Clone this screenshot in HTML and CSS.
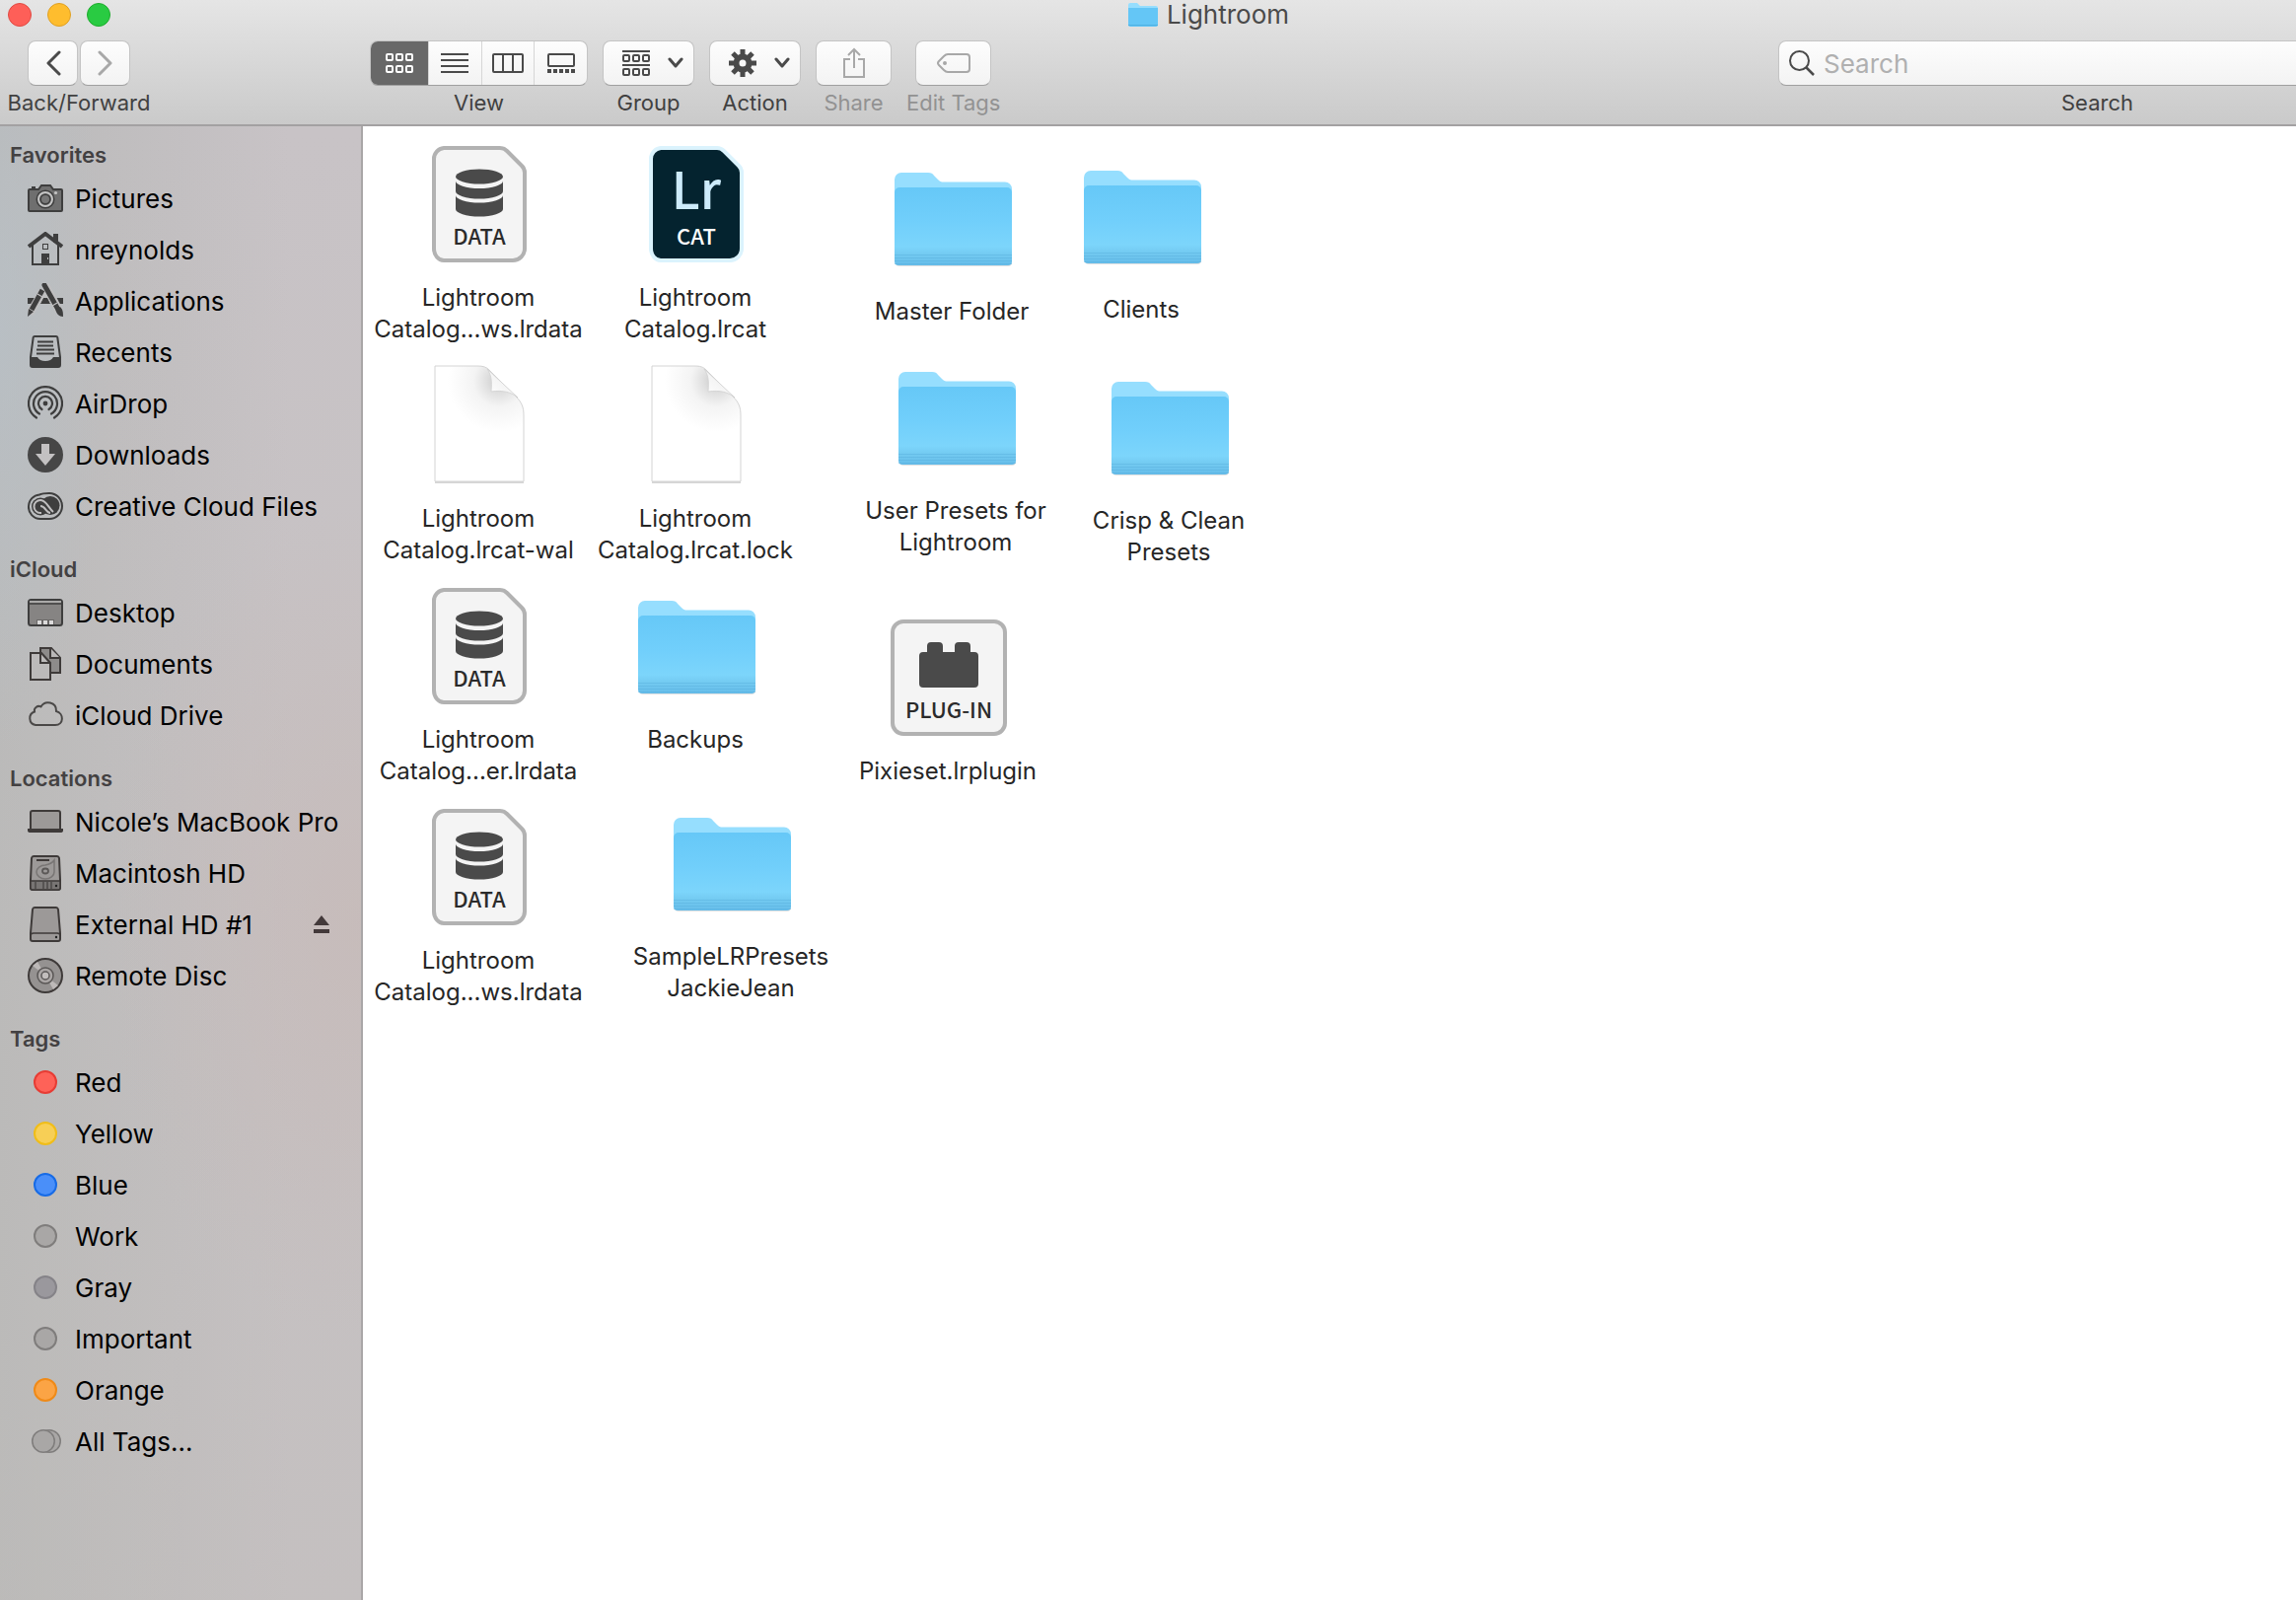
FILE: index.html
```html
<!DOCTYPE html>
<html lang="en">
<head>
<meta charset="utf-8">
<meta name="viewport" content="width=device-width, initial-scale=1.0">
<title>Lightroom</title>
<link rel="stylesheet" href="styles.css">
</head>
<body>
<!-- shared icons -->
<svg class="sprite" aria-hidden="true">
  <defs>
    <linearGradient id="folderFront" x1="0" y1="0" x2="0" y2="1">
      <stop offset="0" stop-color="#66c8f7"/>
      <stop offset="0.45" stop-color="#71cffb"/>
      <stop offset="0.76" stop-color="#7cd5fb"/>
      <stop offset="0.87" stop-color="#72c9f0"/>
      <stop offset="1" stop-color="#66bdea"/>
    </linearGradient>
    <radialGradient id="pageShade" gradientUnits="userSpaceOnUse" cx="66" cy="16" r="52">
      <stop offset="0" stop-color="#c8c8c8"/>
      <stop offset="0.25" stop-color="#e0e0e0"/>
      <stop offset="0.5" stop-color="#f4f4f4"/>
      <stop offset="1" stop-color="#ffffff"/>
    </radialGradient>
    <linearGradient id="curl" x1="0" y1="1" x2="0.6" y2="0.3">
      <stop offset="0" stop-color="#ffffff"/>
      <stop offset="1" stop-color="#f1f1f1"/>
    </linearGradient>
  </defs>
  <symbol id="folder" viewBox="0 0 120 96">
    <rect x="1" y="80" width="118" height="15" rx="4" fill="#000" opacity="0.12"/>
    <path d="M0 7a7 7 0 0 1 7-7h27c3 0 5 1 6 3l4 4c2 2 3 2.500 6 2.500h62a7 7 0 0 1 7 7v30H0z" fill="#96defe"/>
    <path d="M0 20a5 5 0 0 1 5-5h109a5 5 0 0 1 5 5v70a4 4 0 0 1-4 4H4a4 4 0 0 1-4-4z" fill="url(#folderFront)"/>
    <path d="M0 83.500h119M0 86.500h119M0 89.500h119M0 92.500h119" stroke="#55addb" stroke-width="1" opacity="0.4"/>
  </symbol>
  <symbol id="document" viewBox="0 0 96 118">
    <path d="M12 2h57q4 0 7 3l15 15q3 3 3 7v77a12 12 0 0 1-12 12H12a10 12 0 0 1-10-12V13A11 11 0 0 1 12 2z" stroke-width="4"/>
  </symbol>
  <symbol id="cylinder" viewBox="0 0 96 118">
    <ellipse cx="48" cy="31" rx="24" ry="7.500" fill="#4a4a4a"/>
    <path d="M24 35.500A24 7.500 0 0 0 72 35.500V46A24 7.500 0 0 1 24 46zM24 50A24 7.500 0 0 0 72 50V64A24 7.500 0 0 1 24 64z" fill="#4a4a4a"/>
  </symbol>
  <symbol id="page" viewBox="0 0 92 122">
    <rect x="1" y="112" width="90" height="8" fill="#000" opacity="0.16"/>
    <path d="M1 1h43c6 0 9 1 12 4l28 28c5 5 7 10 7 18v67H1z" fill="url(#pageShade)" stroke="#d4d4d4" stroke-width="1"/>
    <path d="M54 4c4 6 5 11 4 23 12-2 21 1 27 6z" fill="url(#curl)" stroke="#d0d0d0" stroke-width="0.800"/>
  </symbol>
  <symbol id="chevron" viewBox="0 0 16 12">
    <path d="M2 2l6 7 6-7" fill="none" stroke="#4a4a4a" stroke-width="3" stroke-linecap="round" stroke-linejoin="round"/>
  </symbol>
</svg>

<div class="window">
  <header class="header">
    <div class="titlebar">
      <div class="lights">
        <button class="light close" aria-label="Close"></button>
        <button class="light minimize" aria-label="Minimize"></button>
        <button class="light zoom" aria-label="Zoom"></button>
      </div>
      <h1 class="title">
        <svg class="title-folder" viewBox="0 0 30 24"><path d="M0 2a2 2 0 0 1 2-2h7l3 3h16a2 2 0 0 1 2 2v8H0z" fill="#96defe"/><path d="M0 5h30v17a2 2 0 0 1-2 2H2a2 2 0 0 1-2-2z" fill="#64c6f6"/><path d="M0 22.500h30" stroke="#4fb1e2"/></svg>
        Lightroom
      </h1>
    </div>
    <div class="toolbar">
      <div class="tool nav">
        <div class="pair">
          <button class="btn arrow" aria-label="Back"><svg width="16" height="26" viewBox="0 0 16 26"><path d="M14 2L3 13l11 11" fill="none" stroke="#4a4a4a" stroke-width="3" stroke-linecap="round" stroke-linejoin="round"/></svg></button>
          <button class="btn arrow" aria-label="Forward" disabled><svg width="16" height="26" viewBox="0 0 16 26"><path d="M2 2l11 11L2 24" fill="none" stroke="#a8a8a8" stroke-width="3" stroke-linecap="round" stroke-linejoin="round"/></svg></button>
        </div>
        <span class="caption">Back/Forward</span>
      </div>
      <div class="tool">
        <div class="segments">
          <button class="segment active" aria-label="Icons" aria-pressed="true">
            <svg width="28" height="20" viewBox="0 0 28 20"><g fill="none" stroke="#fff" stroke-width="2"><rect x="1" y="1" width="6" height="6" rx="1"/><rect x="11" y="1" width="6" height="6" rx="1"/><rect x="21" y="1" width="6" height="6" rx="1"/><rect x="1" y="13" width="6" height="6" rx="1"/><rect x="11" y="13" width="6" height="6" rx="1"/><rect x="21" y="13" width="6" height="6" rx="1"/></g></svg>
          </button>
          <button class="segment" aria-label="List">
            <svg width="28" height="20" viewBox="0 0 28 20"><path d="M0 1h28M0 7h28M0 13h28M0 19h28" stroke="#4a4a4a" stroke-width="2"/></svg>
          </button>
          <button class="segment" aria-label="Columns">
            <svg width="32" height="20" viewBox="0 0 32 20"><rect x="1" y="1" width="30" height="18" rx="1" fill="none" stroke="#4a4a4a" stroke-width="2"/><path d="M11 1v18M21 1v18" stroke="#4a4a4a" stroke-width="2"/></svg>
          </button>
          <button class="segment" aria-label="Gallery">
            <svg width="28" height="20" viewBox="0 0 28 20"><rect x="1" y="1" width="26" height="12" rx="1" fill="none" stroke="#4a4a4a" stroke-width="2"/><path d="M0 18h28" stroke="#4a4a4a" stroke-width="4" stroke-dasharray="4 2"/></svg>
          </button>
        </div>
        <span class="caption">View</span>
      </div>
      <div class="tool">
        <button class="btn popup" aria-label="Group">
          <svg width="28" height="26" viewBox="0 0 28 26"><path d="M0 1h28M0 15h28" stroke="#4a4a4a" stroke-width="2"/><g fill="none" stroke="#4a4a4a" stroke-width="2"><rect x="1" y="5" width="6" height="6" rx="1"/><rect x="11" y="5" width="6" height="6" rx="1"/><rect x="21" y="5" width="6" height="6" rx="1"/><rect x="1" y="19" width="6" height="6" rx="1"/><rect x="11" y="19" width="6" height="6" rx="1"/><rect x="21" y="19" width="6" height="6" rx="1"/></g></svg>
          <svg width="16" height="12"><use href="#chevron"/></svg>
        </button>
        <span class="caption">Group</span>
      </div>
      <div class="tool">
        <button class="btn popup" aria-label="Action">
          <svg width="28" height="28" viewBox="-14 -14 28 28"><g stroke="#4a4a4a" stroke-width="5"><path d="M0-14V-8M0 14V8M-14 0H-8M14 0H8M-10-10L-6-6M10 10L6 6M-10 10L-6 6M10-10L6-6"/></g><circle r="6.500" fill="none" stroke="#4a4a4a" stroke-width="6"/></svg>
          <svg width="16" height="12"><use href="#chevron"/></svg>
        </button>
        <span class="caption">Action</span>
      </div>
      <div class="tool">
        <button class="btn single" aria-label="Share" disabled>
          <svg width="22" height="32" viewBox="0 0 22 32"><path d="M7 12H1v18h20V12h-6M11 21V2M5 8l6-6 6 6" fill="none" stroke="#a8a8a8" stroke-width="2"/></svg>
        </button>
        <span class="caption dim">Share</span>
      </div>
      <div class="tool">
        <button class="btn single" aria-label="Edit Tags" disabled>
          <svg width="34" height="20" viewBox="0 0 34 20"><path d="M11 1h19a3 3 0 0 1 3 3v12a3 3 0 0 1-3 3H11c-2 0-3-1-4-2l-5-5q-2-2 0-4l5-5c1-1 2-2 4-2z" fill="none" stroke="#a8a8a8" stroke-width="2"/><circle cx="8" cy="10" r="2" fill="#a8a8a8"/></svg>
        </button>
        <span class="caption dim">Edit Tags</span>
      </div>
      <div class="tool search">
        <div class="search-box">
          <svg width="26" height="26" viewBox="0 0 26 26"><circle cx="10.500" cy="10.500" r="9.500" fill="none" stroke="#4a4a4a" stroke-width="2"/><path d="M17 17l8 8" stroke="#4a4a4a" stroke-width="2.500"/></svg>
          <input id="search" class="search-input" type="text" placeholder="Search">
        </div>
        <label class="caption" for="search">Search</label>
      </div>
    </div>
  </header>

  <div class="content">
    <nav class="sidebar">
      <h2 class="heading">Favorites</h2>
      <ul class="list">
        <li><a class="row" href="#"><svg class="icon" viewBox="0 0 36 36"><path d="M4 6h4v2H4z" fill="#3e3e3e"/><path d="M2 9h9l3-4h9l3 4h8q1 0 1 1v20q0 1-1 1H2q-1 0-1-1V10q0-1 1-1z" fill="#6f6f6f" stroke="#3e3e3e" stroke-width="2"/><circle cx="18" cy="19" r="9.500" fill="#3e3e3e"/><circle cx="18" cy="19" r="7" fill="#707070" stroke="#c5c5c5" stroke-width="2"/><circle cx="18" cy="19" r="4.800" fill="#777" stroke="#3e3e3e" stroke-width="1.500"/><circle cx="28.500" cy="12.500" r="1.600" fill="#c5c5c5"/></svg>Pictures</a></li>
        <li><a class="row" href="#"><svg class="icon" viewBox="0 0 36 36"><path d="M5 13v20h26V13" fill="none" stroke="#3e3e3e" stroke-width="2"/><path d="M1 15L18 2l17 13" fill="none" stroke="#3e3e3e" stroke-width="4"/><path d="M26 2h5v9h-5zM14 22h8v11h-8z" fill="#3e3e3e"/><rect x="15.500" y="12.500" width="5" height="5" fill="none" stroke="#3e3e3e"/><path d="M20.500 26v2" stroke="#bbb"/></svg>nreynolds</a></li>
        <li><a class="row" href="#"><svg class="icon" viewBox="0 0 36 36"><path d="M0 15h36v6H0z" fill="#3e3e3e"/><path d="M12 21L18 10l6 11z" fill="#c0c0c0"/><path d="M13 21l3-6h4l3 6z" fill="#3e3e3e"/><path d="M18 2L32 28" stroke="#c0bfc0" stroke-width="8"/><path d="M16 7L2 31" stroke="#c0bfc0" stroke-width="8"/><path d="M17 2L30 25" stroke="#3e3e3e" stroke-width="5" stroke-linecap="round"/><path d="M15 7L4 27" stroke="#3e3e3e" stroke-width="5"/><path d="M1 26l5 3-6 5zM28 26l5-2c3 3 3 6 3 10-4 0-7-3-8-8z" fill="#3e3e3e"/><path d="M10 11l5 3M25 23l5-3" stroke="#c0bfc0" stroke-width="1.200"/></svg>Applications</a></li>
        <li><a class="row" href="#"><svg class="icon" viewBox="0 0 36 36"><path d="M7 2h22q1 0 1.300 1L33 23v8q0 2-2 2H5q-2 0-2-2v-8L5.700 3Q6 2 7 2z" fill="none" stroke="#3e3e3e" stroke-width="2"/><path d="M3 23h7q2 4 8 4t8-4h7v8q0 2-2 2H5q-2 0-2-2z" fill="#3e3e3e"/><path d="M10 7.500h16M10 11.500h16M9 15.500h18M9 19.500h18" stroke="#3e3e3e" stroke-width="1.800"/></svg>Recents</a></li>
        <li><a class="row" href="#"><svg class="icon" viewBox="0 0 36 36"><g fill="none" stroke="#3e3e3e" stroke-width="2.200" stroke-linecap="round"><path d="M9 32.500a17 17 0 1 1 18 0M12 28.500a12 12 0 1 1 12 0M14.500 24a7 7 0 1 1 7 0"/></g><circle cx="18" cy="18" r="2.400" fill="#3e3e3e"/></svg>AirDrop</a></li>
        <li><a class="row" href="#"><svg class="icon" viewBox="0 0 36 36"><circle cx="18" cy="18" r="18" fill="#464646"/><path d="M14 7h8v10h6L18 29 8 17h6z" fill="#c3c1c2"/></svg>Downloads</a></li>
        <li><a class="row" href="#"><svg class="icon" viewBox="0 0 36 36"><path d="M12 6.500C15 5 17 5 22 5a13 13 0 0 1 0 26H13A12 12 0 0 1 1 18 12 12 0 0 1 12 6.500z" fill="none" stroke="#3e3e3e" stroke-width="2"/><circle cx="23" cy="17.500" r="9.500" fill="#3e3e3e"/><circle cx="13" cy="18.500" r="9" fill="#3e3e3e"/><path d="M14 25h-1a6 6 0 0 1 0-13c6 0 8 8 13 12M13 18c5 0 6 7 10 7" fill="none" stroke="#c0bfc0" stroke-width="2"/></svg>Creative Cloud Files</a></li>
      </ul>
      <h2 class="heading">iCloud</h2>
      <ul class="list">
        <li><a class="row" href="#"><svg class="icon" viewBox="0 0 36 36"><rect x="1" y="5" width="34" height="26" rx="2.500" fill="#868483" stroke="#3e3e3e" stroke-width="2"/><path d="M2 6h32v2H2z" fill="#aaa9a8"/><path d="M1 9h34" stroke="#3e3e3e" stroke-width="1.500"/><path d="M9 30v-5h18v5z" fill="#6a6867"/><path d="M10 26h4v4h-4zM16 26h4v4h-4zM22 26h4v4h-4z" fill="#dbdada"/></svg>Desktop</a></li>
        <li><a class="row" href="#"><svg class="icon" viewBox="0 0 36 36"><g stroke="#3e3a39" stroke-width="2"><path d="M13 2h11l9 10v15H13z" fill="#8d8b8a"/><path d="M23 2v10h10" fill="#b9b7b7"/><path d="M3 7h11l9 10v17H3z" fill="#bcbaba"/><path d="M13 7v10h10" fill="none"/></g></svg>Documents</a></li>
        <li><a class="row" href="#"><svg class="icon" viewBox="0 0 36 36"><path d="M8 28a7 7 0 0 1-1-13.500C6 11 10 7.500 13.500 9.500c4-7 16-5 15.500 4.500 8 2 8 14-1 14z" fill="none" stroke="#4a4847" stroke-width="2"/></svg>iCloud Drive</a></li>
      </ul>
      <h2 class="heading">Locations</h2>
      <ul class="list">
        <li><a class="row" href="#"><svg class="icon" viewBox="0 0 36 36"><rect x="3" y="7" width="30" height="20" rx="2" fill="#9c9998" stroke="#3e3a39" stroke-width="2"/><path d="M0 25h36v2q0 2-3 2H3q-3 0-3-2z" fill="#3e3a39"/></svg>Nicole’s MacBook Pro</a></li>
        <li><a class="row" href="#"><svg class="icon" viewBox="0 0 36 36"><path d="M6 1h24q1.500 0 2 2l1 22v8q0 2-2 2H5q-2 0-2-2v-8L4 3q.500-2 2-2z" fill="#9c9998" stroke="#3e3a39" stroke-width="2"/><path d="M3 26h30v7q0 2-2 2H5q-2 0-2-2z" fill="#787574" stroke="#3e3a39" stroke-width="1.500"/><path d="M9 5h13" stroke="#3e3a39" stroke-width="2"/><path d="M27 5v12a9 7 0 1 1-9-7q6-1 9-5z" fill="none" stroke="#787574" stroke-width="1.500"/><ellipse cx="18" cy="16" rx="3" ry="2.500" fill="none" stroke="#5b5857" stroke-width="1.800"/><path d="M8 27v8M16 27v8M20 27v8M24 27v8" stroke="#4c4948" stroke-width="1.500"/><circle cx="29" cy="31" r="1.200" fill="#222"/></svg>Macintosh HD</a></li>
        <li class="split"><a class="row" href="#"><svg class="icon" viewBox="0 0 36 36"><path d="M7 1h22q1.500 0 2 2l2 24v6q0 2-2 2H5q-2 0-2-2v-6L5 3q.500-2 2-2z" fill="#9c9998" stroke="#3e3a39" stroke-width="2"/><path d="M3 30q0-3 3-3h24q3 0 3 3" fill="none" stroke="#3e3a39" stroke-width="1.500"/><circle cx="29" cy="31" r="1.200" fill="#222"/></svg>External HD #1</a>
          <button class="eject" aria-label="Eject"><svg width="16" height="18" viewBox="0 0 16 18"><path d="M8 0l8 10H0zM0 14h16v4H0z" fill="#43393a"/></svg></button></li>
        <li><a class="row" href="#"><svg class="icon" viewBox="0 0 36 36"><circle cx="18" cy="18" r="17" fill="#959291" stroke="#3e3a39" stroke-width="2"/><path d="M18 18L5 8l5-4zM18 18l13 10-5 4z" fill="#bdb9b8"/><circle cx="18" cy="18" r="8" fill="#aaa6a5" stroke="#5a5756" stroke-width="1.500"/><circle cx="18" cy="18" r="4" fill="#c2bebd" stroke="#5a5756" stroke-width="1.500"/></svg>Remote Disc</a></li>
      </ul>
      <h2 class="heading">Tags</h2>
      <ul class="list">
        <li><a class="row" href="#"><span class="tag red"></span>Red</a></li>
        <li><a class="row" href="#"><span class="tag yellow"></span>Yellow</a></li>
        <li><a class="row" href="#"><span class="tag blue"></span>Blue</a></li>
        <li><a class="row" href="#"><span class="tag"></span>Work</a></li>
        <li><a class="row" href="#"><span class="tag gray"></span>Gray</a></li>
        <li><a class="row" href="#"><span class="tag"></span>Important</a></li>
        <li><a class="row" href="#"><span class="tag orange"></span>Orange</a></li>
        <li><a class="row" href="#"><svg class="icon" viewBox="0 0 36 36"><g fill="#a9a7a6" stroke="#7f7d7c" stroke-width="1.500"><circle cx="22" cy="18" r="11.250"/><circle cx="16" cy="18" r="11.250"/></g></svg>All Tags...</a></li>
      </ul>
    </nav>

    <!-- files keep the spot they were dropped on -->
    <main class="files">
      <div class="file previews"><div class="thumb"><svg width="96" height="118"><use class="paper" href="#document"/><use href="#cylinder"/><text class="badge-text" x="48" y="100">DATA</text></svg></div><span class="name">Lightroom<br>Catalog...ws.lrdata</span></div>
      <div class="file catalog"><div class="thumb"><svg width="96" height="118"><use class="navy" href="#document"/><text class="logo-text" x="48" y="64">Lr</text><text class="badge-text light-text" x="48" y="100">CAT</text></svg></div><span class="name">Lightroom<br>Catalog.lrcat</span></div>
      <div class="file master"><div class="thumb folder"><svg width="120" height="96"><use href="#folder"/></svg></div><span class="name">Master Folder</span></div>
      <div class="file clients"><div class="thumb folder"><svg width="120" height="96"><use href="#folder"/></svg></div><span class="name">Clients</span></div>
      <div class="file wal"><div class="thumb"><svg width="92" height="122"><use href="#page"/></svg></div><span class="name">Lightroom<br>Catalog.lrcat-wal</span></div>
      <div class="file lock"><div class="thumb"><svg width="92" height="122"><use href="#page"/></svg></div><span class="name">Lightroom<br>Catalog.lrcat.lock</span></div>
      <div class="file user-presets"><div class="thumb folder"><svg width="120" height="96"><use href="#folder"/></svg></div><span class="name">User Presets for<br>Lightroom</span></div>
      <div class="file crisp"><div class="thumb folder"><svg width="120" height="96"><use href="#folder"/></svg></div><span class="name">Crisp &amp; Clean<br>Presets</span></div>
      <div class="file helper"><div class="thumb"><svg width="96" height="118"><use class="paper" href="#document"/><use href="#cylinder"/><text class="badge-text" x="48" y="100">DATA</text></svg></div><span class="name">Lightroom<br>Catalog...er.lrdata</span></div>
      <div class="file backups"><div class="thumb folder"><svg width="120" height="96"><use href="#folder"/></svg></div><span class="name">Backups</span></div>
      <div class="file pixieset"><div class="thumb"><svg width="118" height="118"><rect class="paper" x="2" y="2" width="114" height="114" rx="11" stroke-width="4"/><path d="M29 37a4 4 0 0 1 4-4h4v-6a4 4 0 0 1 4-4h8a4 4 0 0 1 4 4v6h12v-6a4 4 0 0 1 4-4h8a4 4 0 0 1 4 4v6h4a4 4 0 0 1 4 4v28a4 4 0 0 1-4 4H33a4 4 0 0 1-4-4z" fill="#4a4a4a"/><text class="badge-text" x="59" y="100">PLUG-IN</text></svg></div><span class="name">Pixieset.lrplugin</span></div>
      <div class="file smart"><div class="thumb"><svg width="96" height="118"><use class="paper" href="#document"/><use href="#cylinder"/><text class="badge-text" x="48" y="100">DATA</text></svg></div><span class="name">Lightroom<br>Catalog...ws.lrdata</span></div>
      <div class="file sample"><div class="thumb folder"><svg width="120" height="96"><use href="#folder"/></svg></div><span class="name">SampleLRPresets<br>JackieJean</span></div>
    </main>
  </div>
</div>
</body>
</html>
```
FILE: styles.css
```css
* {
  box-sizing: border-box;
}

body {
  margin: 0;
  overflow: hidden;
  font-family: Inter, "Liberation Sans", sans-serif;
  color: #000;
}

button {
  padding: 0;
  border: none;
  font: inherit;
}

.sprite {
  position: absolute;
  width: 0;
  height: 0;
}

/* the window runs past the right edge of the screen */
.window {
  display: flex;
  flex-direction: column;
  width: calc(100% + 122px);
  height: 100vh;
  background: #fff;
}

.header {
  background: linear-gradient(#e5e5e5, #cacaca);
  border-bottom: 2px solid #a3a1a2;
}

.titlebar {
  display: grid;
  grid-template-columns: 1fr auto 1fr;
  align-items: center;
  height: 28px;
}

.lights {
  display: flex;
  gap: 16px;
  padding-left: 8px;
}

.light {
  width: 24px;
  height: 24px;
  border-radius: 50%;
}

.close {
  background: #fe5f58;
  border: 1px solid #e04a43;
}

.minimize {
  background: #febd2e;
  border: 1px solid #dfa023;
}

.zoom {
  background: #29cb42;
  border: 1px solid #1dac2c;
}

.title {
  display: flex;
  align-items: center;
  gap: 9px;
  margin: 0;
  padding: 1px 0 0 1px;
  font-size: 26px;
  line-height: 28px;
  font-weight: 400;
  color: #4a4a4a;
}

.title-folder {
  width: 30px;
  height: 24px;
}

.toolbar {
  display: flex;
  gap: 15px;
  padding: 13px 0 7px 8px;
}

.tool {
  display: flex;
  flex-direction: column;
  align-items: center;
  gap: 2px;
}

.nav {
  width: 144px;
  margin-right: 208px;
}

.caption {
  font-size: 22px;
  line-height: 30px;
  color: #414141;
  white-space: nowrap;
}

.dim {
  color: #929292;
}

.pair {
  display: flex;
  gap: 2px;
}

.btn,
.segments,
.search-box {
  height: 46px;
  background: linear-gradient(#fdfdfd, #f3f3f3);
  border: 1px solid #c4c4c4;
  border-bottom-color: #a0a0a0;
  border-radius: 8px;
}

.btn {
  display: flex;
  align-items: center;
  justify-content: center;
}

.arrow {
  width: 51px;
}

.popup {
  width: 93px;
  padding: 0 10px 0 19px;
  justify-content: space-between;
}

.single {
  width: 77px;
}

.segments {
  display: flex;
  width: 221px;
  overflow: hidden;
}

.segment {
  display: flex;
  flex: 1;
  align-items: center;
  justify-content: center;
  background: none;
  border-left: 1px solid #d6d6d6;
}

.active {
  flex: 0 0 58px;
  background: #686868;
  border-left: none;
}

.search {
  width: 647px;
  margin-left: auto;
}

.search-box {
  display: flex;
  align-items: center;
  gap: 9px;
  width: 100%;
  padding-left: 10px;
}

.search-input {
  flex: 1;
  padding: 0;
  border: none;
  outline: none;
  background: none;
  font: inherit;
  font-size: 26px;
}

.search-input::placeholder {
  color: #b0b0b0;
}

.content {
  display: flex;
  flex: 1;
  min-height: 0;
}

.sidebar {
  width: 368px;
  border-right: 2px solid #a9a6a7;
  background:
    radial-gradient(ellipse 260px 420px at 100% 54%, rgba(199, 184, 181, 0.6), rgba(199, 184, 181, 0)),
    radial-gradient(ellipse 110px 420px at 0 14%, rgba(184, 192, 198, 0.8), rgba(184, 192, 198, 0)),
    linear-gradient(to bottom, rgba(196, 192, 189, 0), rgba(190, 187, 183, 0.4)),
    linear-gradient(to right, #bababa, #c8c3c6 80%);
}

.heading {
  margin: 0;
  padding: 20px 0 0 10px;
  font-size: 22px;
  line-height: 36px;
  font-weight: 600;
  color: #434142;
}

.heading:first-child {
  padding-top: 11px;
}

.list {
  margin: 0;
  padding: 0;
  list-style: none;
}

.row {
  display: flex;
  align-items: center;
  gap: 12px;
  height: 52px;
  padding-left: 28px;
  font-size: 26px;
  color: #000;
  text-decoration: none;
  white-space: nowrap;
}

.icon {
  width: 36px;
  height: 36px;
}

.split {
  display: flex;
  align-items: center;
  justify-content: space-between;
  padding-right: 32px;
}

.eject {
  display: flex;
  background: none;
}

.tag {
  width: 24px;
  height: 24px;
  margin: 0 6px;
  border: 2px solid #7f7d7c;
  border-radius: 50%;
  background: #a9a7a6;
}

.red {
  background: #fe6258;
  border-color: #e73c34;
}

.yellow {
  background: #f7cf56;
  border-color: #f0bd18;
}

.blue {
  background: #4a8ff9;
  border-color: #176be6;
}

.gray {
  background: #9a989d;
  border-color: #858388;
}

.orange {
  background: #fba445;
  border-color: #ef8a18;
}

/* icon canvas */
.files {
  position: relative;
  flex: 1;
}

.file {
  position: absolute;
  display: flex;
  flex-direction: column;
  align-items: center;
  gap: 15px;
  width: 220px;
}

.thumb {
  display: flex;
  align-items: center;
  justify-content: center;
  height: 128px;
}

.folder {
  padding: 4px 0 0 1px;
}

.name {
  padding-right: 2px;
  font-size: 24px;
  line-height: 32px;
  color: #262626;
  text-align: center;
  white-space: nowrap;
}

.paper {
  fill: #f4f4f4;
  stroke: #b2b2b2;
}

.navy {
  fill: #04232f;
  stroke: #dbf3fd;
}

.badge-text,
.logo-text {
  font-family: "Noto Sans CJK SC", sans-serif;
  font-size: 22px;
  font-weight: 500;
  text-anchor: middle;
  fill: #2b2b2b;
}

.logo-text {
  font-size: 52px;
  fill: #cdebfb;
}

.light-text {
  fill: #fff;
}

.previews { left: 8px; top: 15px; }
.wal { left: 8px; top: 239px; }
.helper { left: 8px; top: 463px; }
.smart { left: 8px; top: 687px; }
.catalog { left: 228px; top: 15px; }
.lock { left: 228px; top: 239px; }
.backups { left: 228px; top: 463px; }
.sample { left: 264px; top: 683px; }
.master { left: 488px; top: 29px; }
.user-presets { left: 492px; top: 231px; }
.pixieset { left: 484px; top: 495px; }
.clients { left: 680px; top: 27px; }
.crisp { left: 708px; top: 241px; }
```
